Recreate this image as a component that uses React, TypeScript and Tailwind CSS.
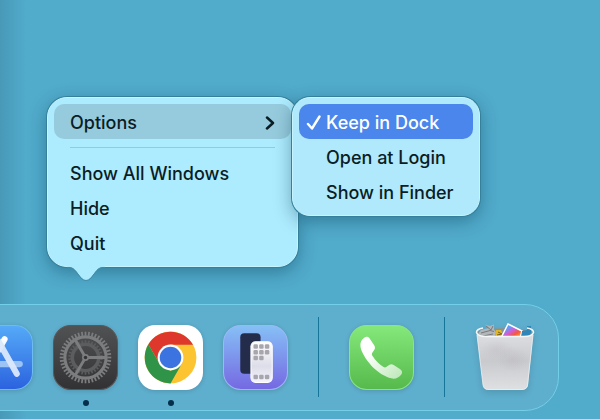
import type { ReactNode } from 'react';

type DockItem = { name: string; running?: boolean; icon: ReactNode };

const teeth = (count: number) => Array.from({ length: count }, (_, i) => (i * 360) / count);

function AppStoreIcon() {
    return (
        <svg viewBox="0 0 64 64" className="size-[65px] rounded-[17px] drop-shadow-sm">
            <defs>
                <linearGradient id="store" x1="0" y1="0" x2="0" y2="1"><stop stopColor="#55aaf8" /><stop offset="1" stopColor="#2b62df" /></linearGradient>
                <linearGradient id="leg" x1="0" y1="0" x2="0" y2="1"><stop stopColor="#fff" /><stop offset="1" stopColor="#a9c9f6" /></linearGradient>
            </defs>
            <rect x="0.5" y="0.5" width="63" height="63" rx="17" fill="url(#store)" stroke="#6cbcf2" />
            <g strokeWidth="6" strokeLinecap="round">
                <path d="M11 38.500H51" stroke="#9cc3f5" />
                <path d="M36 14 16 49" stroke="url(#leg)" />
                <path d="M30 16 48 48" stroke="#dbe8fb" opacity=".95" />
            </g>
        </svg>
    );
}

function SettingsIcon() {
    return (
        <svg viewBox="0 0 64 64" className="size-[65px] drop-shadow-sm">
            <defs>
                <linearGradient id="settings" x1="0" y1="0" x2="0" y2="1"><stop stopColor="#515254" /><stop offset="1" stopColor="#323234" /></linearGradient>
            </defs>
            <rect x="0.5" y="0.5" width="63" height="63" rx="17" fill="url(#settings)" stroke="#56595c" />
            <g fill="none" stroke="#5c5d5f">
                <circle cx="32" cy="32" r="13" strokeWidth="3.5" />
                {teeth(30).map(angle => <path key={angle} d="M32 15v2.500" strokeWidth="1.600" transform={`rotate(${angle} 32 32)`} />)}
            </g>
            <g fill="none" stroke="#7c7d7f">
                <circle cx="32" cy="32" r="20.300" strokeWidth="3" />
                {teeth(44).map(angle => <path key={angle} d="M32 6.600v4" strokeWidth="1.700" transform={`rotate(${angle} 32 32)`} />)}
                <path d="M32 32h20M32 32 22 14.700M32 32 22 49.300" strokeWidth="2.800" />
            </g>
            <circle cx="32" cy="32" r="3.400" fill="#7c7d7f" />
            <circle cx="32" cy="32" r="1.700" fill="#353537" />
        </svg>
    );
}

function ChromeIcon() {
    return (
        <svg viewBox="0 0 64 64" className="size-[65px] drop-shadow-sm">
            <rect width="64" height="64" rx="17" fill="#fff" />
            <circle cx="32" cy="32" r="25.500" fill="#fcc430" />
            <path d="M32 19.500H54.200A25.500 25.500 0 0 0 10.200 19L21.200 38.200Z" fill="#dd382b" />
            <path d="M10.200 19A25.500 25.500 0 0 0 32 57.500L43 38.500 32 45 21.200 38.200Z" fill="#2f9447" />
            <circle cx="32" cy="32" r="12.700" fill="#fff" />
            <circle cx="32" cy="32" r="10.600" fill="#3b73e0" />
        </svg>
    );
}

function SimulatorIcon() {
    return (
        <svg viewBox="0 0 64 64" className="size-[65px] drop-shadow-sm">
            <defs>
                <linearGradient id="sim" x1="0" y1="0" x2="0" y2="1"><stop stopColor="#86c0f6" /><stop offset="1" stopColor="#7568e2" /></linearGradient>
                <linearGradient id="simFront" x1="0" y1="0" x2="0" y2="1"><stop stopColor="#fff" /><stop offset=".6" stopColor="#dddde9" /><stop offset="1" stopColor="#f4f4fc" /></linearGradient>
            </defs>
            <rect x="0.5" y="0.5" width="63" height="63" rx="17" fill="url(#sim)" stroke="#9ab9f2" />
            <rect x="17" y="8" width="20" height="40" rx="4" fill="#242c4b" />
            <rect x="27.500" y="16.500" width="21" height="40" rx="4.500" fill="url(#simFront)" stroke="#fff" />
            <g fill="#a7a6ad">
                {[[30, 19], [35.6, 19], [41.2, 19], [30, 24.6], [35.6, 24.6], [41.2, 24.6], [30, 30.2], [35.6, 30.2], [30, 49], [35.6, 49], [41.2, 49]].map(([x, y]) => (
                    <rect key={`${x}-${y}`} x={x} y={y} width="4.400" height="4.400" rx="1.200" />
                ))}
            </g>
        </svg>
    );
}

function PhoneIcon() {
    return (
        <svg viewBox="0 0 64 64" className="size-[65px] drop-shadow-sm">
            <defs>
                <linearGradient id="phone" x1="0" y1="0" x2="0" y2="1"><stop stopColor="#84e87b" /><stop offset="1" stopColor="#55b94b" /></linearGradient>
                <linearGradient id="handset" x1="0" y1="0" x2="1" y2="1"><stop offset=".3" stopColor="#fff" /><stop offset="1" stopColor="#b9e7b5" /></linearGradient>
            </defs>
            <rect x="0.500" y="0.500" width="63" height="63" rx="17" fill="url(#phone)" stroke="#8ce28d" />
            <path d="M15 12.500C17 11 19 11.500 20.500 13.500L24.800 20C26 22 25.800 23.500 24.500 25L22.800 27.500C22.300 28.500 22.500 29.500 23.200 30.500C26.500 35.500 29.500 38.500 34 41.300C35 41.900 36 41.900 37 41.100L39.500 39.300C41 38.300 42.500 38.300 44 39.300L50.500 43.500C52.500 45 52.800 47 51.500 48.700C49 52 45.500 53.500 41.500 52.500C36 51.200 28.500 46.500 22.500 40.500C16.500 34 12 26.500 11.300 21.500C10.800 17.500 12 14.500 15 12.500Z" fill="url(#handset)" />
        </svg>
    );
}

function TrashIcon() {
    return (
        <svg viewBox="0 0 60 70" className="h-[70px] w-[60px] drop-shadow-md">
            <defs>
                <linearGradient id="bin" x1="0" y1="0" x2="0" y2="1"><stop stopColor="#dfe0e3" /><stop offset=".5" stopColor="#c9cace" /><stop offset="1" stopColor="#dfe0e2" /></linearGradient>
                <linearGradient id="photo" x1="0" y1="0" x2="1" y2="1"><stop stopColor="#36a6f4" /><stop offset=".3" stopColor="#5c9df5" /><stop offset=".5" stopColor="#d35bd6" /><stop offset=".7" stopColor="#f3583b" /><stop offset="1" stopColor="#ffc629" /></linearGradient>
                <radialGradient id="crumple"><stop stopColor="#a3a0aa" stopOpacity=".2" /><stop offset="1" stopColor="#a3a0aa" stopOpacity="0" /></radialGradient>
            </defs>
            <ellipse cx="30" cy="10" rx="27.500" ry="5" fill="#8a9196" />
            <path d="M3 11 6 7l8-2-4-3.500 5 1.500 4-1.500v5l2 2.500-1 6H6Z" fill="#b3b6b8" />
            <path d="m11 3 5 4 2-4M6 10l9-2.500 4 1M8 13l10-2" fill="none" stroke="#777b7e" />
            <path d="m21 7 5 0 4 8h-9Z" fill="#e2b62b" />
            <path d="m23 9 4 2m-5 1 5-1" stroke="#73611d" />
            <path d="m33 1 14 7-2 7H26Z" fill="url(#photo)" stroke="#fff" strokeWidth="1.500" />
            <path d="M47 8 52 7V3l4 0v7l-4 5h-6Z" fill="#2f86b8" />
            <path d="M1.500 9Q3 13.500 11 13.500H49Q57 13.500 58.500 9L53 62Q52.500 67 46 67H14Q8.500 67 8 62Z" fill="url(#bin)" />
            <ellipse cx="22" cy="27" rx="17" ry="11" fill="url(#crumple)" />
            <ellipse cx="38" cy="36" rx="16" ry="13" fill="url(#crumple)" />
            <path d="M8 5Q1.500 6 1.500 9.500Q3 13.500 11 13.500H49Q57 13.500 58.500 9.500Q58.500 6 52 5" fill="none" stroke="#f4f6f7" strokeWidth="1.500" />
            <path d="M2 12 8 62q.5 4.500 6 4.500h32q6 0 6.500-4.500L58 12" fill="none" stroke="#eceef0" opacity=".8" />
        </svg>
    );
}

const apps: DockItem[] = [
    { name: 'App Store', icon: <AppStoreIcon /> },
    { name: 'System Settings', running: true, icon: <SettingsIcon /> },
    { name: 'Google Chrome', running: true, icon: <ChromeIcon /> },
    { name: 'Simulator', icon: <SimulatorIcon /> },
];

function DockButton({ name, running, icon }: DockItem) {
    return (
        <button aria-label={name} className="flex shrink-0 cursor-pointer flex-col items-center gap-2.5">
            {icon}
            <span className={`size-1.5 rounded-full ${running ? 'bg-[#062f4b]' : 'bg-transparent'}`} />
        </button>
    );
}

function DockDivider() {
    return <div className="-mt-2 h-20 w-px shrink-0 bg-[#17759a]" />;
}

const rowClass = 'flex h-[35px] w-full cursor-pointer items-center rounded-[10px] pt-0.5 text-left';
const panelClass = 'border border-[#c6f5ff] p-1.5 shadow-[0_0_0_1px_#35819c,0_5px_18px_rgba(0,50,75,0.4)]';

export default function App() {
    return (
        <main className="min-h-screen overflow-hidden bg-[#51abcb] bg-linear-to-r from-[#4899b8] to-[#51abcb] to-[26px] pt-[97px] font-['Inter','Liberation_Sans',sans-serif] text-lg leading-6 font-medium text-[#0b1d24]">
            <div className="ml-[47px] flex items-start">
                <div role="menu" className={`relative w-[251px] shrink-0 rounded-[20px] bg-[#adebfe] ${panelClass}`}>
                    <button role="menuitem" className={`${rowClass} justify-between bg-[#96cbdd] px-4`}>
                        Options
                        <svg viewBox="0 0 10 14" className="h-3.5 w-2.5" fill="none" stroke="currentColor" strokeWidth="2.500" strokeLinecap="round" strokeLinejoin="round"><path d="m2 1.500 6 5.500-6 5.500" /></svg>
                    </button>
                    <hr className="mx-4 mt-2 mb-[7px] border-[#91cbdd]" />
                    <button role="menuitem" className={`${rowClass} px-4`}>Show All Windows</button>
                    <button role="menuitem" className={`${rowClass} px-4`}>Hide</button>
                    <button role="menuitem" className={`${rowClass} px-4`}>Quit</button>
                    <svg viewBox="0 0 42 18" className="absolute left-[17px] top-full h-[18px] w-[42px]">
                        <path d="M2 0H40V1C35 1 34 2 31 5L26 11.500Q21 17 16 11.500L11 5C8 2 7 1 2 1Z" fill="#adebfe" />
                        <path d="M2 1.500C7 1.500 8 2 11 5.500L16 12Q21 17 26 12L31 5.500C34 2 35 1.500 40 1.500" fill="none" stroke="#3f8ca7" />
                    </svg>
                </div>
                <div role="menu" className={`relative -ml-1.5 w-[188px] shrink-0 rounded-[18px] bg-[#b0e9fb] ${panelClass}`}>
                    <button role="menuitemcheckbox" aria-checked="true" className={`${rowClass} gap-1 bg-[#4a86eb] pl-[7px] text-white`}>
                        <svg viewBox="0 0 16 16" className="size-4" fill="none" stroke="currentColor" strokeWidth="2.400" strokeLinecap="round" strokeLinejoin="round"><path d="m2 9 4 4.500 7.500-12" /></svg>
                        Keep in Dock
                    </button>
                    <button role="menuitem" className={`${rowClass} pl-[27px]`}>Open at Login</button>
                    <button role="menuitem" className={`${rowClass} pl-[27px]`}>Show in Finder</button>
                </div>
            </div>
            <nav aria-label="Dock" className="-ml-10 mr-[41px] mt-[37px] flex items-start gap-[30px] rounded-[34px] border border-[#75cee7] bg-[#5eaecd] pb-1 pl-[7px] pt-5">
                <div className="flex gap-5">
                    {apps.map(app => <DockButton key={app.name} {...app} />)}
                </div>
                <DockDivider />
                <DockButton name="Phone" icon={<PhoneIcon />} />
                <DockDivider />
                <button aria-label="Trash" className="-mt-0.5 shrink-0 cursor-pointer"><TrashIcon /></button>
            </nav>
        </main>
    );
}
